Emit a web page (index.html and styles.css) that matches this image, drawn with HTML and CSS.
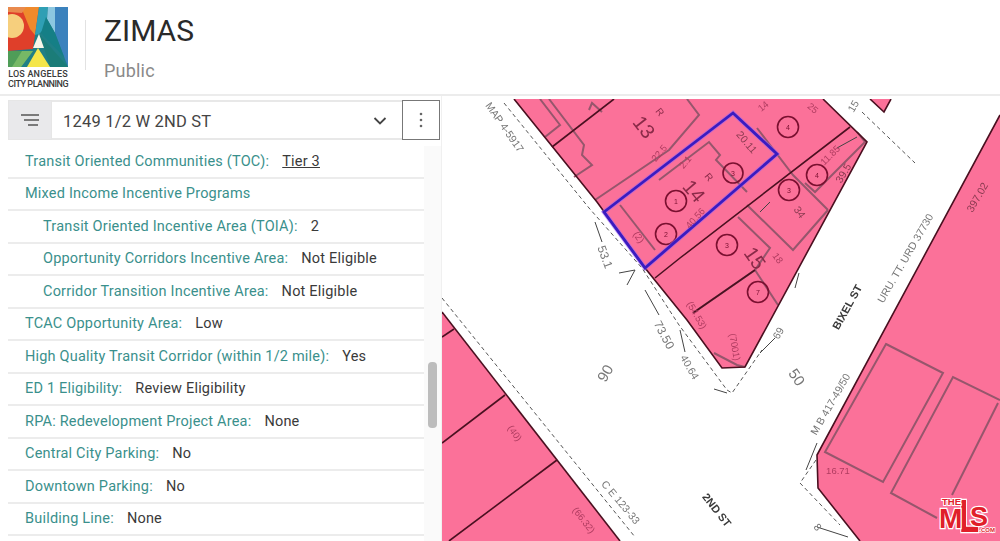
FILE: index.html
```html
<!DOCTYPE html>
<html lang="en">
<head>
<meta charset="utf-8">
<title>ZIMAS</title>
<link rel="stylesheet" href="styles.css">
</head>
<body>
<header class="app-header">
  <div class="brand">
    <svg class="brand-mark" viewBox="0 0 60 60" aria-hidden="true">
      <rect width="60" height="60" fill="#1f7f86"/>
      <polygon points="0,0 31,0 25,42 0,44" fill="#df3f2a"/>
      <polygon points="13,0 31,0 27,28 22,22" fill="#ef8a2c"/>
      <polygon points="0,0 18,0 14,6 0,5" fill="#e98a4e"/>
      <circle cx="4" cy="19" r="12" fill="#f6cf7d"/>
      <polygon points="31,0 40,0 38,20 31,27 27,28" fill="#2f9fb4"/>
      <polygon points="40,0 47,0 47,26 39,12" fill="#8cc7e0"/>
      <polygon points="47,0 60,0 60,60 47,26" fill="#3b82bd"/>
      <polygon points="31,27 60,60 42,60 36,41" fill="#1b7c78"/>
      <polygon points="38,10 47,26 56,50 33,26" fill="#157f86"/>
      <polygon points="31,27 36,41 25,41" fill="#f8f6e8"/>
      <polygon points="0,44 25,44 13,60 0,60" fill="#4f9d58"/>
      <polygon points="14,44 25,44 13,60 4,60" fill="#76b866"/>
      <polygon points="30,41 42,60 19,60" fill="#f4e64a"/>
    </svg>
    <div class="brand-name">LOS ANGELES</div>
    <div class="brand-name tight">CITY PLANNING</div>
  </div>
  <div class="title-block">
    <h1 class="app-title">ZIMAS</h1>
    <div class="app-subtitle">Public</div>
  </div>
</header>

<main class="workspace">
  <section class="side">
    <div class="search">
      <button class="menu-btn" type="button" aria-label="Menu">
        <svg viewBox="0 0 20 14" width="20" height="14" aria-hidden="true">
          <path d="M1 2h18M4 7h15M8 12h10" stroke="#555" stroke-width="1.3" fill="none"/>
        </svg>
      </button>
      <div class="address">
        <span>1249 1/2 W 2ND ST</span>
        <svg viewBox="0 0 14 8" width="14" height="8" aria-hidden="true">
          <path d="M1.5 1l5.5 5.5L12.5 1" stroke="#444" stroke-width="1.8" fill="none"/>
        </svg>
      </div>
      <button class="more-btn" type="button" aria-label="More">
        <svg viewBox="0 0 4 16" width="4" height="16" aria-hidden="true">
          <circle cx="2" cy="2" r="1.3" fill="#666"/>
          <circle cx="2" cy="8" r="1.3" fill="#666"/>
          <circle cx="2" cy="14" r="1.3" fill="#666"/>
        </svg>
      </button>
    </div>
    <div class="details">
      <ul class="rows">
        <li class="row"><span class="key">Transit Oriented Communities (TOC):</span><a class="val link">Tier 3</a></li>
        <li class="row"><span class="key">Mixed Income Incentive Programs</span></li>
        <li class="row sub"><span class="key">Transit Oriented Incentive Area (TOIA):</span><span class="val">2</span></li>
        <li class="row sub"><span class="key">Opportunity Corridors Incentive Area:</span><span class="val">Not Eligible</span></li>
        <li class="row sub"><span class="key">Corridor Transition Incentive Area:</span><span class="val">Not Eligible</span></li>
        <li class="row"><span class="key">TCAC Opportunity Area:</span><span class="val">Low</span></li>
        <li class="row"><span class="key">High Quality Transit Corridor (within 1/2 mile):</span><span class="val">Yes</span></li>
        <li class="row"><span class="key">ED 1 Eligibility:</span><span class="val">Review Eligibility</span></li>
        <li class="row"><span class="key">RPA: Redevelopment Project Area:</span><span class="val">None</span></li>
        <li class="row"><span class="key">Central City Parking:</span><span class="val">No</span></li>
        <li class="row"><span class="key">Downtown Parking:</span><span class="val">No</span></li>
        <li class="row"><span class="key">Building Line:</span><span class="val">None</span></li>
        <li class="row"></li>
      </ul>
      <div class="scroll-track"><div class="scroll-thumb"></div></div>
    </div>
  </section>

  <section class="map">
    <svg class="parcel-map" viewBox="442 99 558 442" aria-label="Parcel map">
      <g class="fill">
        <polygon points="514,99 823,99 867,142 745,367 722,368 687,320 645,268 597,202"/>
        <polygon points="870,99 891,99 884,112"/>
        <polygon points="1000,115 817,455 818,488 860,541 1000,541"/>
        <polygon points="442,312 620,541 442,541"/>
      </g>
      <g class="building">
        <polyline points="540,99 560,125 545,137"/>
        <polyline points="549,99 584,145 582,155 592,165 574,177"/>
        <polyline points="589,110 592,103 602,112"/>
        <polyline points="595,200 669,150 699,115 687,99"/>
        <polyline points="620,205 655,250"/>
        <polyline points="659,180 709,142 720,155 716,160 747,192"/>
        <polyline points="757,128 793,175 828,210"/>
        <polyline points="805,183 815,192 865,142 857,132"/>
        <polyline points="747,205 793,250 828,210"/>
        <polyline points="738,217 770,248 755,270 693,313"/>
        <polyline points="755,270 778,305"/>
        <polyline points="714,353 737,365 745,367"/>
        <polygon points="886,344 943,373 883,482 825,452"/>
        <polyline points="1000,400 953,377 891,493 937,518"/>
        <polyline points="998,403 952,495"/>
      </g>
      <g class="lot">
        <polyline points="552,147 614,99"/>
        <polyline points="655,278 680,258 850,127"/>
        <polyline points="442,337 454,329"/>
        <polyline points="442,443 505,395"/>
        <polyline points="449,541 557,460"/>
        <polyline points="693,313 755,270"/>
        <polyline points="514,99 597,202 645,268 687,320 722,368 745,367 867,142 823,99"/>
        <polyline points="442,312 620,541"/>
        <polyline points="1000,115 817,455 818,488 860,541"/>
        <polyline points="870,99 884,112 891,99"/>
      </g>
      <g class="circles">
        <circle cx="788" cy="127" r="10.5"/>
        <circle cx="733" cy="173" r="10"/>
        <circle cx="789" cy="190" r="10.5"/>
        <circle cx="817" cy="175" r="10.5"/>
        <circle cx="727" cy="245" r="10.5"/>
        <circle cx="758" cy="292" r="10.5"/>
        <circle cx="676" cy="201" r="10.5"/>
        <circle cx="666" cy="234" r="10.5"/>
      </g>
      <polygon class="subject-halo" points="604,212 733,113 777,154 645,268"/>
      <polygon class="subject" points="604,212 733,113 777,154 645,268"/>
      <g class="dash">
        <polyline points="504,103 589,208 642,268 679,325 727,390 732,393 762,350"/>
        <polyline points="442,298 635,537"/>
        <polyline points="862,112 915,163"/>
        <polyline points="816,460 800,483 840,525"/>
      </g>
      <g class="leader">
        <polyline points="595,222 602,242"/>
        <polyline points="619,273 635,270 627,285"/>
        <polyline points="645,290 659,315"/>
        <polyline points="680,330 685,352"/>
        <polyline points="714,389 727,393"/>
        <polyline points="760,353 775,338"/>
        <polyline points="760,212 770,202"/>
        <polyline points="837,148 857,137"/>
        <polyline points="795,288 799,273"/>
        <polyline points="817,443 806,470"/>
        <polyline points="817,527 848,537"/>
      </g>
      <g class="gray-text">
        <text transform="translate(505,127) rotate(55)">MAP 4-5917</text>
        <text class="mid" transform="translate(605,257) rotate(70)">53.1</text>
        <text class="mid" transform="translate(664,335) rotate(62)">73.50</text>
        <text transform="translate(690,367) rotate(60)">40.64</text>
        <text class="big" transform="translate(605,373) rotate(-60)">90</text>
        <text class="big" transform="translate(797,377) rotate(55)">50</text>
        <text transform="translate(778,333) rotate(-60)">69</text>
        <text transform="translate(621,502) rotate(50)">C E 123-33</text>
        <text transform="translate(830,404) rotate(-60)">M B 417-49/50</text>
        <text transform="translate(905,258) rotate(-60)">URU. TT. URD 37730</text>
        <text transform="translate(853,106) rotate(-60)">15</text>
        <text transform="translate(818,527) rotate(50)">8</text>
        <text class="road" transform="translate(717,510) rotate(52)">2ND ST</text>
        <text class="road" transform="translate(847,307) rotate(-61)">BIXEL ST</text>
      </g>
      <g class="red-text">
        <text class="num" transform="translate(644,127) rotate(52)">13</text>
        <text class="small" transform="translate(660,112) rotate(52)">R</text>
        <text class="num" transform="translate(694,191) rotate(50)">14</text>
        <text class="small" transform="translate(709,177) rotate(50)">R</text>
        <text class="num" transform="translate(755,258) rotate(55)">15</text>
        <text transform="translate(515,433) rotate(55)">(40)</text>
        <text transform="translate(584,520) rotate(52)">(66.32)</text>
        <text transform="translate(735,347) rotate(80)">(7001)</text>
        <text transform="translate(697,315) rotate(60)">(54.53)</text>
        <text transform="translate(695,218) rotate(-48)">40.56</text>
        <text transform="translate(838,470)">16.71</text>
        <text class="dark" transform="translate(843,173) rotate(-60)">39.5</text>
        <text transform="translate(830,155) rotate(-45)">11.85</text>
        <text class="dark" transform="translate(977,197) rotate(-60)">397.02</text>
        <text class="dark" transform="translate(747,142) rotate(50)">20.11</text>
        <text class="dark" transform="translate(800,212) rotate(55)">34</text>
        <text transform="translate(763,106) rotate(-40)">14</text>
        <text transform="translate(813,108) rotate(40)">25</text>
        <text transform="translate(778,258) rotate(55)">18</text>
        <text transform="translate(659,153) rotate(-50)">22.5</text>
        <text transform="translate(685,162) rotate(-50)">2.1</text>
        <text transform="translate(639,237) rotate(55)">(2)</text>
      </g>
      <g class="circle-text">
        <text x="788" y="127">4</text>
        <text x="733" y="173">3</text>
        <text x="789" y="190">3</text>
        <text x="817" y="175">4</text>
        <text x="727" y="245">3</text>
        <text x="758" y="292">7</text>
        <text x="676" y="201">1</text>
        <text x="666" y="234">2</text>
      </g>
    </svg>
    <div class="mls-badge">
      <span class="mls-l">L</span>
      <span class="mls-m">M</span>
      <span class="mls-s">S</span>
      <span class="mls-the">THE</span>
      <span class="mls-com">.COM</span>
    </div>
  </section>
</main>
</body>
</html>
```
FILE: styles.css
```css
* { box-sizing: border-box; }

html, body {
  margin: 0;
  height: 541px;
  overflow: hidden;
  background: #fff;
  font-family: Roboto, "Liberation Sans", sans-serif;
}

.app-header {
  height: 96px;
  display: flex;
  align-items: flex-start;
  border-bottom: 2px solid #ececec;
}

.brand {
  width: 86px;
  height: 70px;
  margin-top: 7px;
  padding-left: 8px;
  position: relative;
}

.brand::after {
  content: "";
  position: absolute;
  left: 85px;
  top: 13px;
  width: 1px;
  height: 50px;
  background: #e2e2e2;
}

.brand-mark {
  display: block;
  width: 60px;
  height: 60px;
  margin-bottom: 2px;
  filter: blur(0.5px);
}

.brand-name {
  width: 60px;
  font-size: 9px;
  line-height: 10px;
  font-weight: 500;
  letter-spacing: 0.2px;
  white-space: nowrap;
  color: #3a3a3a;
  text-align: center;
}

.brand-name.tight {
  letter-spacing: -0.45px;
}

.title-block {
  padding: 10px 0 0 18px;
}

.app-title {
  margin: 0;
  font-size: 30px;
  line-height: 42px;
  font-weight: 400;
  color: #2a2a2a;
}

.app-subtitle {
  margin-top: 8px;
  font-size: 18px;
  line-height: 22px;
  letter-spacing: 0.2px;
  color: #8a8a8a;
}

.workspace {
  display: flex;
  height: 445px;
}

.side {
  width: 442px;
  flex: none;
  display: flex;
  flex-direction: column;
  background: #fff;
  border-right: 1px solid #f0f0f0;
}

.search {
  display: flex;
  height: 42px;
  margin: 4px 0 0 8px;
  flex: none;
}

.menu-btn {
  width: 44px;
  height: 40px;
  flex: none;
  display: flex;
  align-items: center;
  justify-content: center;
  padding: 0;
  background: #e9e9eb;
  border: 1px solid #e6e6e6;
}

.address {
  width: 350px;
  height: 40px;
  flex: none;
  display: flex;
  align-items: center;
  justify-content: space-between;
  padding: 2px 15px 0 11px;
  border-top: 2px solid #e8e8e8;
  border-bottom: 2px solid #e8e8e8;
  font-size: 16.5px;
  letter-spacing: 0.2px;
  color: #444;
}

.more-btn {
  width: 38px;
  height: 40px;
  flex: none;
  display: flex;
  align-items: center;
  justify-content: center;
  padding: 0;
  background: #fff;
  border: 1px solid #777;
}

.details {
  flex: 1;
  min-height: 0;
  display: flex;
  overflow: hidden;
  padding-top: 4px;
}

.rows {
  list-style: none;
  margin: 0 0 0 8px;
  padding: 0;
  width: 416px;
  flex: none;
}

.row {
  height: 32.5px;
  display: flex;
  align-items: center;
  gap: 13px;
  padding-left: 17px;
  font-size: 14.5px;
  letter-spacing: 0.2px;
  white-space: nowrap;
  border-bottom: 2px solid #ececec;
}

.row.sub {
  padding-left: 35px;
}

.key {
  color: #3a908c;
}

.val {
  color: #3a3a3a;
}

.link {
  text-decoration: underline;
}

.scroll-track {
  width: 17px;
  flex: none;
  padding: 216px 4px 0;
  background: #fafafa;
}

.scroll-thumb {
  width: 9px;
  height: 66px;
  border-radius: 4px;
  background: #bdbdbd;
}

.map {
  flex: 1;
  position: relative;
  padding-top: 3px;
  overflow: hidden;
}

.parcel-map {
  display: block;
  width: 558px;
  height: 442px;
  filter: blur(0.4px);
}

.fill polygon { fill: #fb7199; }

.building polyline,
.building polygon {
  fill: none;
  stroke: #96566c;
  stroke-width: 2;
}

.lot polyline {
  fill: none;
  stroke: #4a1020;
  stroke-width: 1.6;
}

.circles circle {
  fill: none;
  stroke: #7a1030;
  stroke-width: 1.6;
}

.subject-halo {
  fill: none;
  stroke: #a060f0;
  stroke-width: 4.5;
  opacity: 0.6;
}

.subject {
  fill: none;
  stroke: #3a1cc0;
  stroke-width: 2.8;
}

.dash polyline {
  fill: none;
  stroke: #555;
  stroke-width: 1;
  stroke-dasharray: 4 3;
}

.leader polyline {
  fill: none;
  stroke: #444;
  stroke-width: 1;
}

.gray-text text,
.red-text text,
.circle-text text {
  font-family: "Liberation Sans", sans-serif;
  text-anchor: middle;
  dominant-baseline: central;
}

.gray-text text {
  font-size: 10.5px;
  fill: #777;
}

.gray-text .mid { font-size: 12px; }
.gray-text .big { font-size: 15px; }

.gray-text .road {
  font-size: 11px;
  font-weight: 700;
  fill: #3a3a3a;
}

.red-text text {
  font-size: 9.5px;
  fill: #b03c60;
}

.red-text .dark {
  font-size: 10.5px;
  fill: #8a3a50;
}

.red-text .num {
  font-size: 20px;
  fill: #8a2a48;
}

.red-text .small {
  font-size: 10px;
  fill: #8a2a48;
}

.circle-text text {
  font-size: 7px;
  fill: #7a1030;
}

.mls-badge {
  position: absolute;
  right: 3px;
  bottom: 6px;
  width: 60px;
  height: 40px;
  font-family: "Liberation Sans", sans-serif;
  font-weight: 700;
  color: #e0202a;
  -webkit-text-stroke: 2.5px #fff;
  paint-order: stroke fill;
}

.mls-the,
.mls-m,
.mls-l,
.mls-s,
.mls-com {
  position: absolute;
  line-height: 1;
}

.mls-the {
  left: 5px;
  top: 2px;
  font-size: 9.5px;
  -webkit-text-stroke: 2px #fff;
}

.mls-m {
  left: 2px;
  top: 10px;
  font-size: 28px;
}

.mls-l {
  left: 22px;
  top: -2px;
  font-size: 46px;
  transform: scaleX(0.72);
  transform-origin: left center;
}

.mls-s {
  left: 33px;
  top: 9px;
  font-size: 27px;
}

.mls-com {
  right: 2px;
  top: 32px;
  font-size: 6px;
  -webkit-text-stroke: 1.5px #fff;
}
```
